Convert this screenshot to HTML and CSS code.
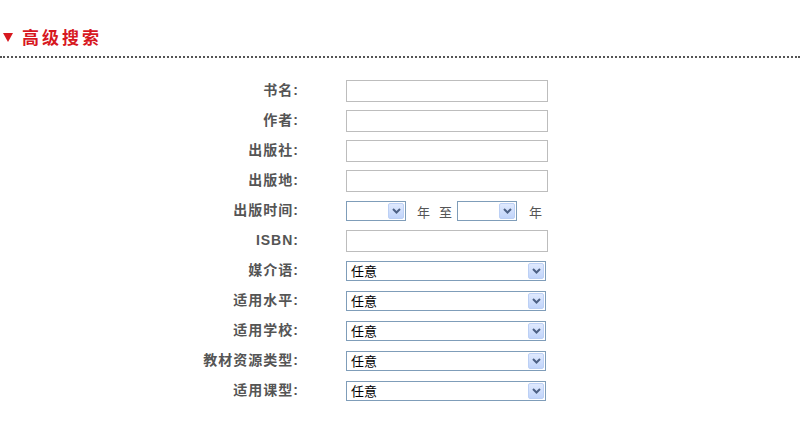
FILE: index.html
```html
<!DOCTYPE html>
<html lang="zh-CN">
<head>
<meta charset="utf-8">
<title>高级搜索</title>
<link rel="stylesheet" href="styles.css">
</head>
<body>
<div class="header">
  <span class="tri"></span>
  <h1 class="title">高级搜索</h1>
</div>
<form class="form">
  <label class="lbl">书名:</label>
  <div class="field"><span class="txt"></span></div>

  <label class="lbl">作者:</label>
  <div class="field"><span class="txt"></span></div>

  <label class="lbl">出版社:</label>
  <div class="field"><span class="txt"></span></div>

  <label class="lbl">出版地:</label>
  <div class="field"><span class="txt"></span></div>

  <label class="lbl">出版时间:</label>
  <div class="field date">
    <span class="sel small"><span class="val"></span><span class="btn"><svg width="9" height="6" viewBox="0 0 9 6"><path d="M1 1 L4.5 4.5 L8 1" fill="none" stroke="#4d6185" stroke-width="2"/></svg></span></span>
    <span class="unit y1">年</span>
    <span class="unit to">至</span>
    <span class="sel small s2"><span class="val"></span><span class="btn"><svg width="9" height="6" viewBox="0 0 9 6"><path d="M1 1 L4.5 4.5 L8 1" fill="none" stroke="#4d6185" stroke-width="2"/></svg></span></span>
    <span class="unit y2">年</span>
  </div>

  <label class="lbl">ISBN:</label>
  <div class="field"><span class="txt"></span></div>

  <label class="lbl">媒介语:</label>
  <div class="field"><span class="sel"><span class="val">任意</span><span class="btn"><svg width="9" height="6" viewBox="0 0 9 6"><path d="M1 1 L4.5 4.5 L8 1" fill="none" stroke="#4d6185" stroke-width="2"/></svg></span></span></div>

  <label class="lbl">适用水平:</label>
  <div class="field"><span class="sel"><span class="val">任意</span><span class="btn"><svg width="9" height="6" viewBox="0 0 9 6"><path d="M1 1 L4.5 4.5 L8 1" fill="none" stroke="#4d6185" stroke-width="2"/></svg></span></span></div>

  <label class="lbl">适用学校:</label>
  <div class="field"><span class="sel"><span class="val">任意</span><span class="btn"><svg width="9" height="6" viewBox="0 0 9 6"><path d="M1 1 L4.5 4.5 L8 1" fill="none" stroke="#4d6185" stroke-width="2"/></svg></span></span></div>

  <label class="lbl">教材资源类型:</label>
  <div class="field"><span class="sel"><span class="val">任意</span><span class="btn"><svg width="9" height="6" viewBox="0 0 9 6"><path d="M1 1 L4.5 4.5 L8 1" fill="none" stroke="#4d6185" stroke-width="2"/></svg></span></span></div>

  <label class="lbl">适用课型:</label>
  <div class="field"><span class="sel"><span class="val">任意</span><span class="btn"><svg width="9" height="6" viewBox="0 0 9 6"><path d="M1 1 L4.5 4.5 L8 1" fill="none" stroke="#4d6185" stroke-width="2"/></svg></span></span></div>
</form>
</body>
</html>
```
FILE: styles.css
```css
html, body {
  margin: 0;
  padding: 0;
  background: #fff;
}
body {
  font-family: "Liberation Sans", "Noto Sans CJK SC", sans-serif;
  width: 800px;
  height: 427px;
  overflow: hidden;
}
.header {
  display: flex;
  align-items: center;
  padding: 27px 0 9px 3px;
  border-bottom: 2px dotted #555;
}
.tri {
  width: 0;
  height: 0;
  border-left: 5px solid transparent;
  border-right: 5px solid transparent;
  border-top: 9px solid #d7181f;
  margin-top: 1px;
}
.title {
  margin: 0 0 0 9px;
  font-family: "Noto Sans CJK SC", sans-serif;
  font-size: 17px;
  line-height: 20px;
  font-weight: 700;
  letter-spacing: 3px;
  color: #d7181f;
}
.form {
  display: grid;
  grid-template-columns: 298px 1fr;
  grid-auto-rows: 30px;
  column-gap: 48px;
  margin-top: 18px;
}
.lbl {
  display: flex;
  align-items: center;
  justify-content: flex-end;
  font-size: 14px;
  line-height: 16px;
  font-weight: bold;
  letter-spacing: 1px;
  color: #555;
  margin-right: -1px;
  padding-bottom: 2px;
}
.field {
  display: flex;
  align-items: center;
}
.txt {
  display: block;
  width: 200px;
  height: 20px;
  border: 1px solid #bdbdbd;
  background: #fff;
}
.sel {
  display: flex;
  align-items: center;
  justify-content: space-between;
  box-sizing: border-box;
  width: 200px;
  height: 20px;
  border: 1px solid #7f9db9;
  background: #fff;
  padding: 0 1px 0 4px;
}
.sel.small {
  width: 60px;
}
.val {
  font-family: "Noto Sans CJK SC", sans-serif;
  font-size: 13px;
  line-height: 16px;
  color: #000;
}
.btn {
  display: flex;
  align-items: center;
  justify-content: center;
  box-sizing: border-box;
  width: 16px;
  height: 16px;
  border: 1px solid #bcd0f5;
  border-radius: 2px;
  background: linear-gradient(#dfe9fe, #c1d4fa);
}
.unit {
  font-family: "Noto Sans CJK SC", sans-serif;
  font-size: 13px;
  color: #555;
}
.y1 { margin-left: 11px; }
.to { margin-left: 9px; }
.s2 { margin-left: 5px; }
.y2 { margin-left: 12px; }
```
